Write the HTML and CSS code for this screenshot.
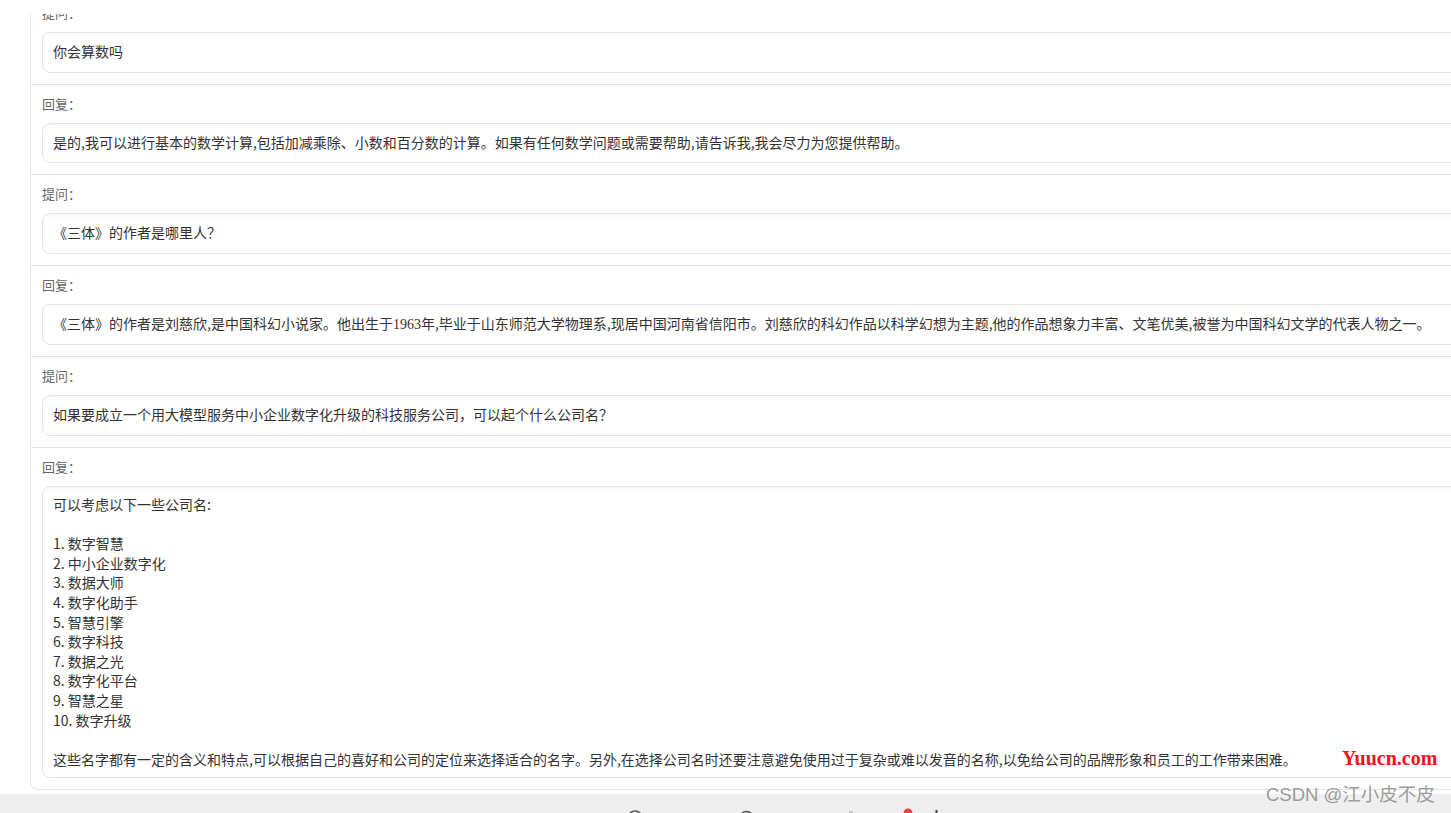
FILE: index.html
```html
<!DOCTYPE html>
<html lang="zh-CN">
<head>
<meta charset="utf-8">
<title>对话记录</title>
<link rel="stylesheet" href="styles.css">
</head>
<body>
<div class="page">
  <div class="topbar"></div>
  <div class="main">
    <div class="card">
      <div class="row">
        <div class="label">提问：</div>
        <div class="box">你会算数吗</div>
      </div>
      <div class="row">
        <div class="label">回复：</div>
        <div class="box">是的,我可以进行基本的数学计算,包括加减乘除、小数和百分数的计算。如果有任何数学问题或需要帮助,请告诉我,我会尽力为您提供帮助。</div>
      </div>
      <div class="row">
        <div class="label">提问：</div>
        <div class="box">《三体》的作者是哪里人？</div>
      </div>
      <div class="row">
        <div class="label">回复：</div>
        <div class="box">《三体》的作者是刘慈欣,是中国科幻小说家。他出生于<span class="num">1963</span>年,毕业于山东师范大学物理系,现居中国河南省信阳市。刘慈欣的科幻作品以科学幻想为主题,他的作品想象力丰富、文笔优美,被誉为中国科幻文学的代表人物之一。</div>
      </div>
      <div class="row">
        <div class="label">提问：</div>
        <div class="box">如果要成立一个用大模型服务中小企业数字化升级的科技服务公司，可以起个什么公司名？</div>
      </div>
      <div class="row">
        <div class="label">回复：</div>
        <div class="box long">可以考虑以下一些公司名:

1. 数字智慧
2. 中小企业数字化
3. 数据大师
4. 数字化助手
5. 智慧引擎
6. 数字科技
7. 数据之光
8. 数字化平台
9. 智慧之星
10. 数字升级

这些名字都有一定的含义和特点,可以根据自己的喜好和公司的定位来选择适合的名字。另外,在选择公司名时还要注意避免使用过于复杂或难以发音的名称,以免给公司的品牌形象和员工的工作带来困难。</div>
      </div>
    </div>
  </div>
  <div class="footer">
    <div class="tools">
      <svg class="ic ic1" width="16" height="16" viewBox="0 0 16 16"><circle cx="8" cy="9" r="7" fill="none" stroke="#555" stroke-width="1.6"/></svg>
      <svg class="ic ic2" width="15" height="16" viewBox="0 0 15 16"><circle cx="7.5" cy="9" r="6.5" fill="none" stroke="#555" stroke-width="1.6"/></svg>
      <svg class="ic ic3" width="6" height="16" viewBox="0 0 6 16"><rect x="1" y="2" width="4" height="14" rx="1" fill="#c4c4c4"/></svg>
      <svg class="ic ic4" width="10" height="16" viewBox="0 0 10 16"><circle cx="5" cy="5" r="4.5" fill="#e2453c"/></svg>
      <svg class="ic ic5" width="3" height="16" viewBox="0 0 3 16"><rect x="0.5" y="1" width="2" height="15" fill="#444"/></svg>
    </div>
  </div>
  <div class="wm-yuucn">Yuucn.com</div>
  <div class="wm-csdn">CSDN @江小皮不皮</div>
</div>
</body>
</html>
```

FILE: styles.css
```css
html, body {
  margin: 0;
  padding: 0;
  background: #ffffff;
  overflow: hidden;
}

body {
  font-family: "Noto Sans CJK SC", "Microsoft YaHei", sans-serif;
  color: #333333;
}

.page {
  position: relative;
  height: 813px;
  display: flex;
  flex-direction: column;
  overflow: hidden;
}

.topbar {
  flex: none;
  height: 14px;
  background: #ffffff;
  position: relative;
  z-index: 1;
}

.main {
  flex: 1;
  min-height: 0;
  overflow: hidden;
}

.card {
  margin: -21px 0 0 30px;
  width: 1480px;
  border: 1px solid #e4e4e4;
  border-radius: 8px;
  background: #ffffff;
}

.row {
  padding: 9px 11px 11px;
  border-top: 1px solid #e4e4e4;
}

.row:first-child {
  border-top: none;
}

.label {
  font-size: 13px;
  line-height: 20px;
  color: #666666;
  margin-bottom: 9px;
}

.box {
  border: 1px solid #e4e4e4;
  border-radius: 8px;
  padding: 9px 10px 10px;
  font-size: 14px;
  line-height: 19.6px;
  color: #333333;
  white-space: nowrap;
  box-shadow: inset 0 2px 4px rgba(0, 0, 0, 0.035);
}

.box.long {
  padding: 8px 10px;
  white-space: pre;
}

.num {
  font-family: "Liberation Serif", serif;
}

.footer {
  flex: none;
  height: 19px;
  background: #efefef;
  overflow: hidden;
}

.tools {
  display: flex;
  align-items: flex-start;
  padding: 15px 0 0 627px;
}

.ic {
  flex: none;
  display: block;
}

.ic2 { margin-left: 96px; }
.ic3 { margin-left: 94px; }
.ic4 { margin-left: 49px; margin-top: -1px; }
.ic5 { margin-left: 22px; }

.wm-yuucn {
  position: absolute;
  left: 1342px;
  top: 748px;
  font-family: "Liberation Serif", serif;
  font-weight: bold;
  font-size: 20px;
  line-height: 20px;
  color: #f2121e;
}

.wm-csdn {
  position: absolute;
  left: 1266px;
  top: 786px;
  font-family: "Liberation Sans", "Noto Sans CJK SC", sans-serif;
  font-size: 18.5px;
  line-height: 18.5px;
  color: #9c9c9c;
  white-space: nowrap;
}
```
